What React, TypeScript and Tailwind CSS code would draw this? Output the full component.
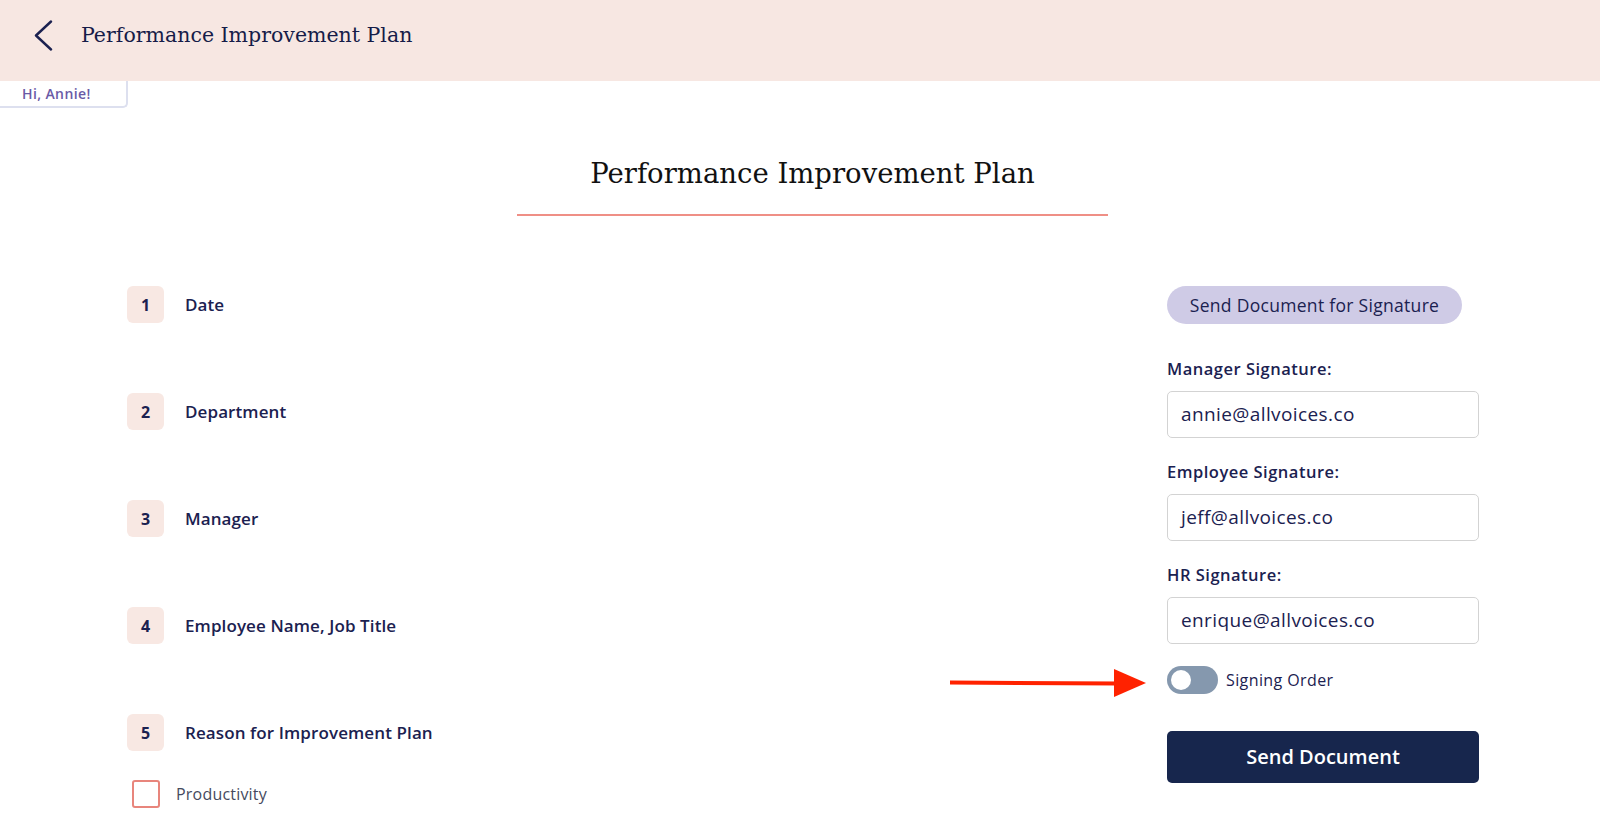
import React from "react";

const sans = "font-['Open_Sans',sans-serif]";
const serif = "font-['DejaVu_Serif',serif]";

const sections = ["Date", "Department", "Manager", "Employee Name, Job Title", "Reason for Improvement Plan"];

const signers = [
  { label: "Manager Signature:", email: "annie@allvoices.co" },
  { label: "Employee Signature:", email: "jeff@allvoices.co" },
  { label: "HR Signature:", email: "enrique@allvoices.co" },
];

function BackChevron() {
  return (
    <svg width="20" height="31" viewBox="0 0 20 31" fill="none">
      <path d="M18 1.5 L3 15.5 L18 29.5" stroke="#1b2150" strokeWidth="2.4" strokeLinecap="round" strokeLinejoin="round" />
    </svg>
  );
}

function Arrow() {
  return (
    <svg width="196" height="30" viewBox="0 0 196 30" className="absolute left-[950px] top-[668px]">
      <path d="M0 12.5 L168 13.5 L168 17.5 L0 16.5 Z" fill="#ff2200" />
      <path d="M164 1 L196 15 L164 29 Z" fill="#ff2200" />
    </svg>
  );
}

export default function App() {
  return (
    <div className={`relative min-h-[823px] bg-white ${sans}`}>
      <header className="flex h-[81px] items-center bg-[#f7e7e2] pb-[10px] pl-[33px]">
        <BackChevron />
        <h1 className={`ml-[28px] text-[20.5px] text-[#161c48] ${serif}`}>Performance Improvement Plan</h1>
      </header>

      <div className="flex h-[27px] w-[128px] items-center rounded-br-[5px] border-b-2 border-r-2 border-[#dde0ef] pl-[22px] text-[14px] font-semibold tracking-[0.4px] text-[#6a5aa6]">
        Hi, Annie!
      </div>

      <div className="ml-[517px] mt-[47px] w-[591px]">
        <h2 className={`text-center text-[27.5px] leading-[36px] text-[#111111] ${serif}`}>
          Performance Improvement Plan
        </h2>
        <div className="mt-[23px] h-[2px] bg-[#ef8f86]" />
      </div>

      <div className="mt-[70px] flex pl-[127px]">
        <div className="w-[1040px]">
          {sections.map((s, i) => (
            <div key={s} className={`flex items-center ${i > 0 ? "mt-[70px]" : ""}`}>
              <div className="flex h-[37px] w-[37px] items-center justify-center rounded-[6px] bg-[#f8e8e3] text-[16px] font-bold text-[#1b2150]">
                {i + 1}
              </div>
              <span className="ml-[21px] text-[17px] font-semibold tracking-[0.1px] text-[#1b2150]">{s}</span>
            </div>
          ))}
          <div className="ml-[5px] mt-[29px] flex items-center">
            <div className="h-[28px] w-[28px] rounded-[3px] border-2 border-[#e8857c]" />
            <span className="ml-[16px] text-[16px] tracking-[0.2px] text-[#464a5e]">Productivity</span>
          </div>
        </div>

        <div className="w-[312px]">
          <div className="flex h-[38px] w-[295px] items-center justify-center rounded-full bg-[#cfcbe6] text-[17.5px] tracking-[0.3px] text-[#1b2150]">
            Send Document for Signature
          </div>
          {signers.map((s, i) => (
            <div key={s.label} className={i === 0 ? "mt-[35px]" : "mt-[24px]"}>
              <div className="text-[16.5px] font-semibold leading-[20px] tracking-[0.5px] text-[#1b2150]">{s.label}</div>
              <div className="mt-[12px] flex h-[47px] items-center rounded-[5px] border border-[#d3d3d3] pl-[13px] text-[19px] tracking-[0.4px] text-[#1b2150]">
                {s.email}
              </div>
            </div>
          ))}
          <div className="mt-[22px] flex items-center">
            <div className="flex h-[28px] w-[51px] items-center rounded-full bg-[#8598ae] pl-[4px]">
              <div className="h-[20px] w-[20px] rounded-full bg-white" />
            </div>
            <span className="ml-[8px] text-[16px] tracking-[0.4px] text-[#1b2150]">Signing Order</span>
          </div>
          <button className="mt-[37px] flex h-[52px] w-full items-center justify-center rounded-[5px] bg-[#17264d] text-[20px] font-semibold text-white">
            Send Document
          </button>
        </div>
      </div>

      <Arrow />
    </div>
  );
}
